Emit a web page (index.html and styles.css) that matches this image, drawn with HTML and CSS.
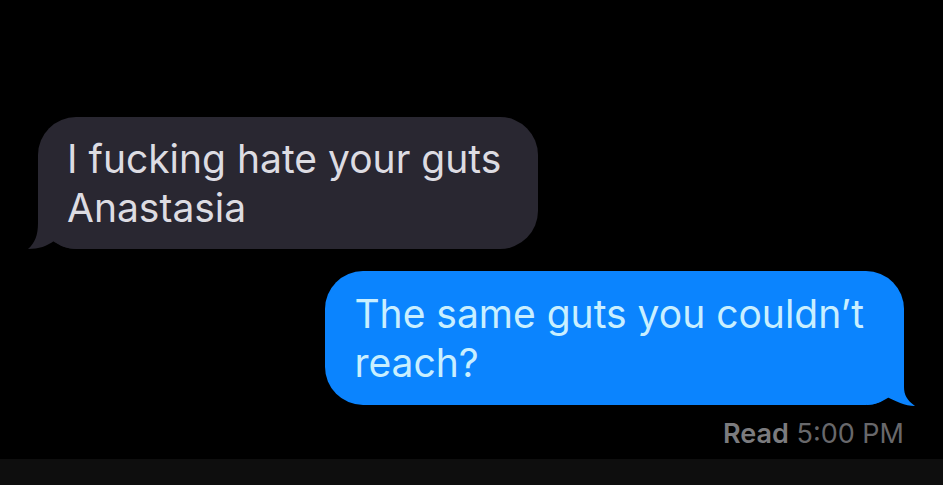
FILE: index.html
```
<!DOCTYPE html>
<html lang="en">
<head>
    <meta charset="UTF-8">
    <meta name="viewport" content="width=device-width, initial-scale=1">
    <title>Messages</title>
    <link rel="stylesheet" href="styles.css">
</head>
<body>
    <main class="chat">
        <div class="bubble received">
            <svg class="tail" viewBox="0 0 48 44" aria-hidden="true">
                <path d="M10 0V16C10 28 7 36 0 42C11 42 19 39 26 34C32 39 40 42 48 42V0Z"/>
            </svg>
            <p>I fucking hate your guts<br>Anastasia</p>
        </div>
        <div class="bubble sent">
            <svg class="tail" viewBox="0 0 48 44" aria-hidden="true">
                <path d="M37 0V24C37 32 40 37 48 43C38 43 28 38 20 34C14 39 8 42 0 42V0Z"/>
            </svg>
            <p>The same guts you couldn’t<br>reach?</p>
        </div>
        <p class="status"><b>Read</b> 5:00 PM</p>
    </main>
    <footer class="bottom"></footer>
</body>
</html>
```

FILE: styles.css
```
* {
    margin: 0;
    padding: 0;
    box-sizing: border-box;
}
body {
    display: flex;
    flex-direction: column;
    min-height: 100vh;
    background-color: #000;
    font-family: Inter, "Liberation Sans", sans-serif;
}
.chat {
    display: flex;
    flex: 1;
    flex-direction: column;
    justify-content: flex-end;
    padding: 0 39px 10px 38px;
}
.bubble {
    position: relative;
    max-width: 100%;
    padding: 18px 40px 18px 29px;
    border-radius: 38px;
    font-size: 39px;
    line-height: 49px;
}
.bubble p {
    position: relative;
}
.received {
    align-self: flex-start;
    margin-bottom: 22px;
    padding: 17px 37px 17px 29px;
    background-color: #292731;
    color: #dddce2;
}
.sent {
    align-self: flex-end;
    background-color: #0b84fe;
    color: #c9efff;
}
/* tail hangs outside the bottom corner */
.tail {
    position: absolute;
    bottom: -2px;
    width: 48px;
    height: 44px;
}
.received .tail {
    left: -10px;
    fill: #292731;
}
.sent .tail {
    right: -11px;
    fill: #0b84fe;
}
.status {
    align-self: flex-end;
    margin-top: 14px;
    color: #68686b;
    font-size: 27px;
    line-height: 30px;
}
.status b {
    color: #7b7b7e;
    font-weight: 600;
}
.bottom {
    height: 26px;
    background-color: #0e0e0e;
}
```
